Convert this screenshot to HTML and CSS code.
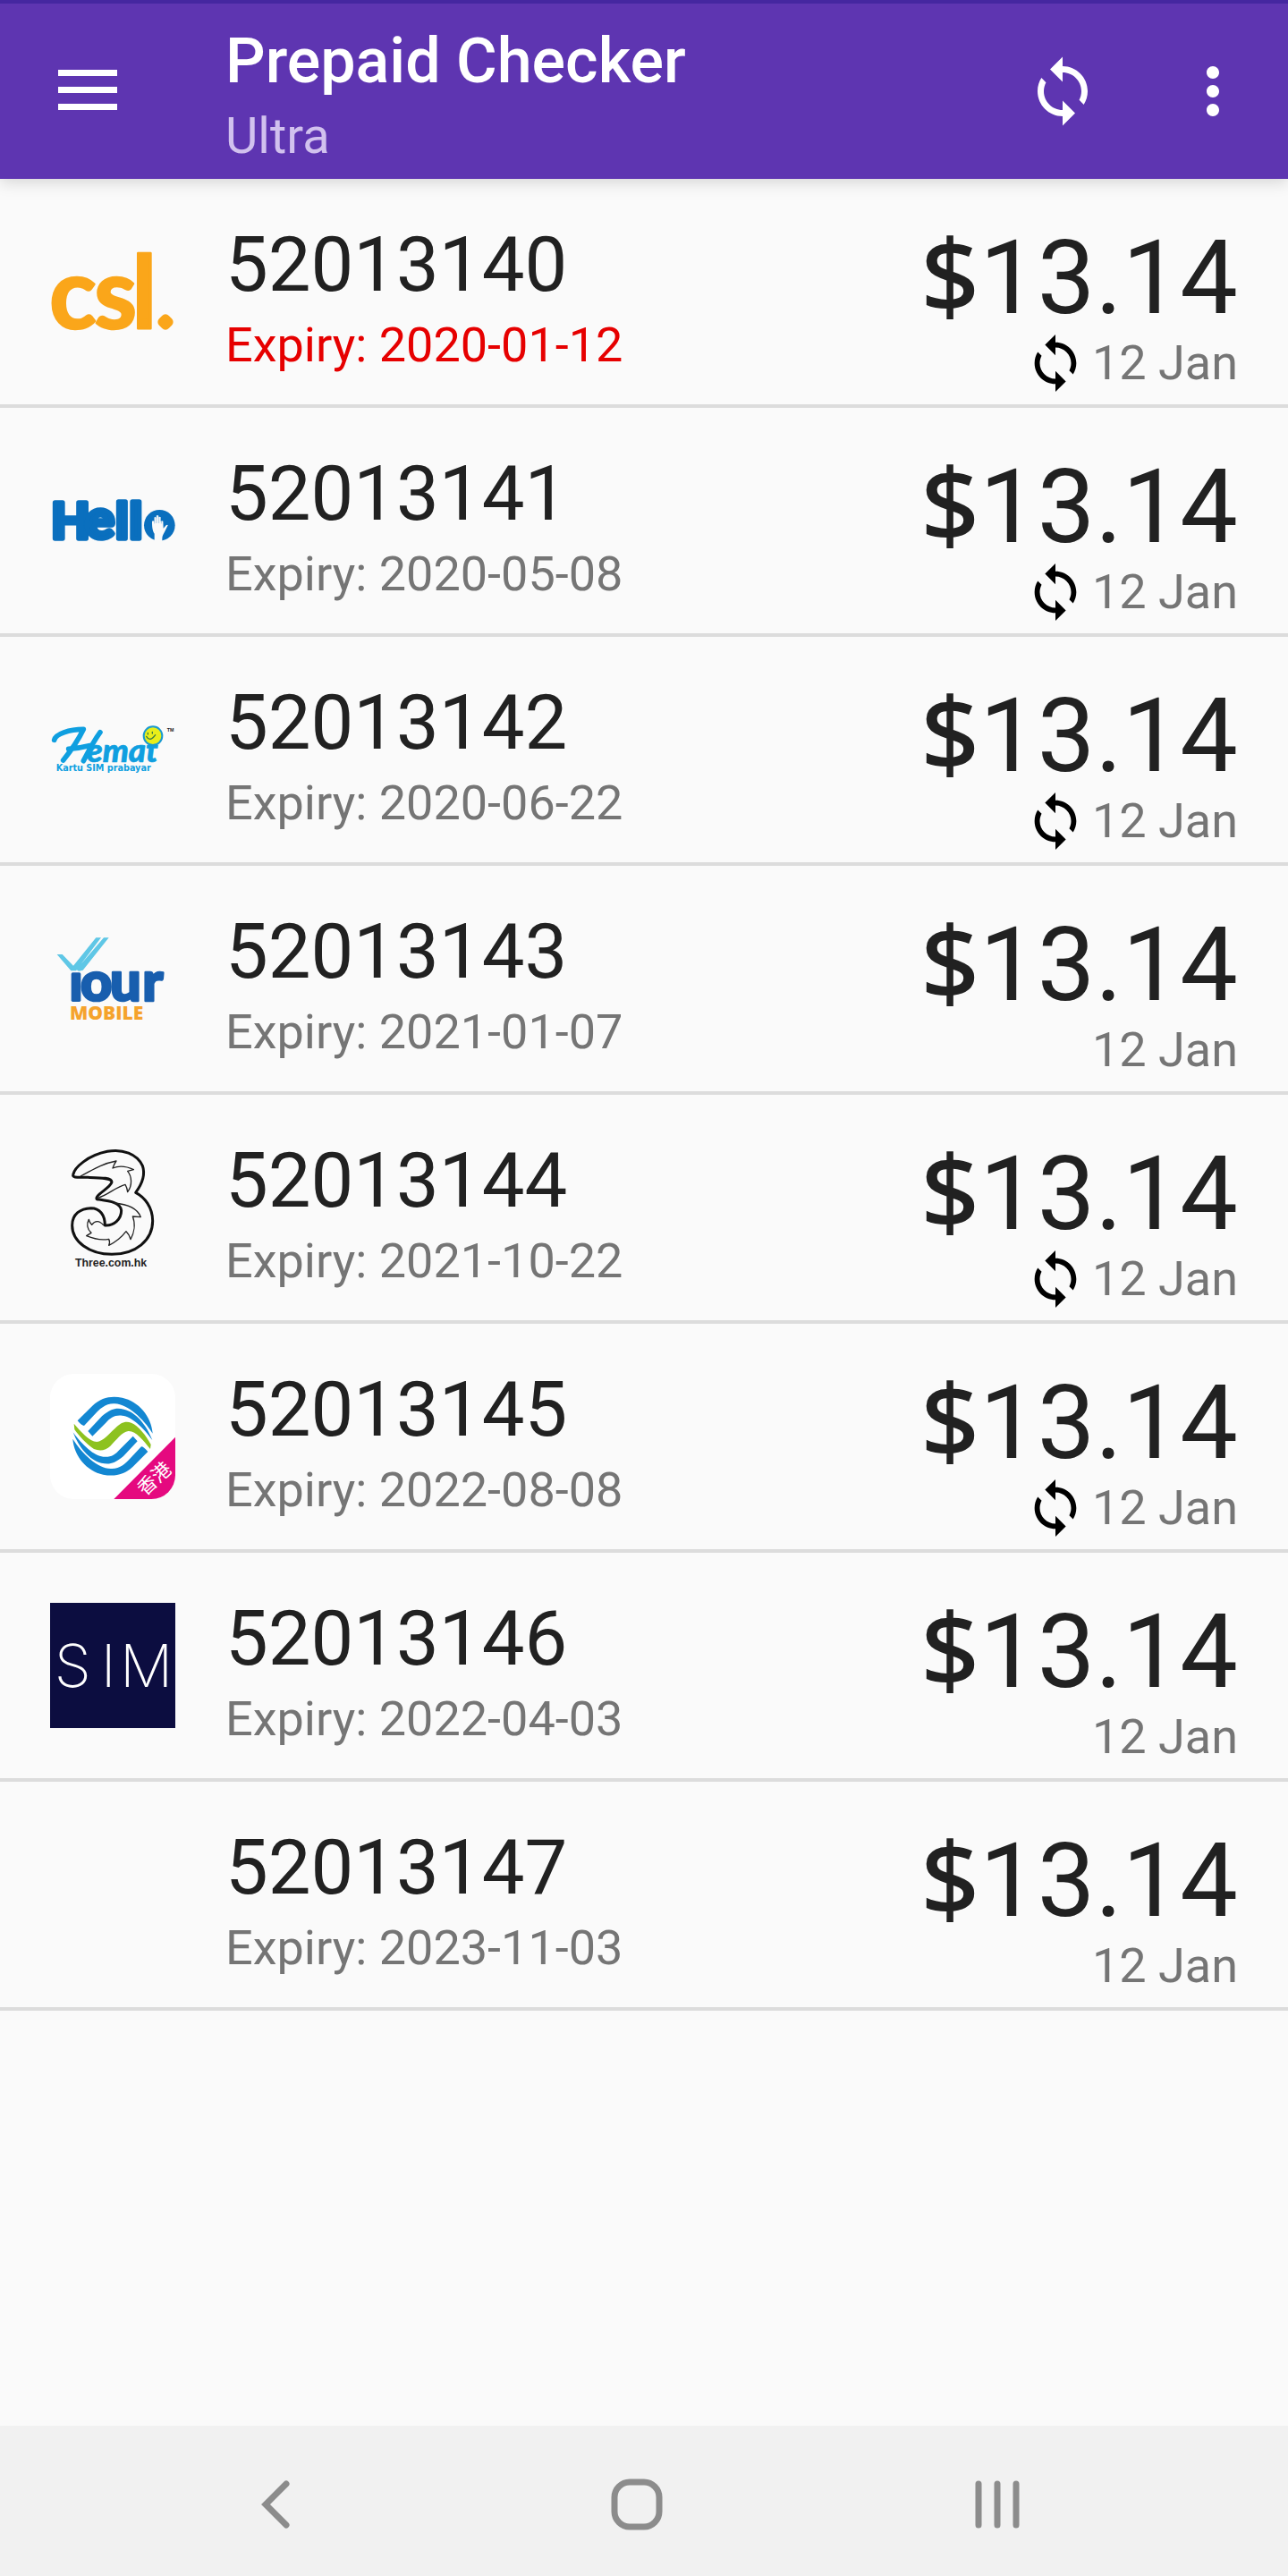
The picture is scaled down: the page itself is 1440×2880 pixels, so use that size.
FILE: index.html
```html
<!DOCTYPE html>
<html lang="en">
  <head>
    <meta charset="UTF-8" />
    <meta name="viewport" content="width=device-width, initial-scale=1.0" />
    <title>Prepaid Checker</title>
    <link rel="stylesheet" href="styles.css">
  </head>
  <body>
    <!-- Shared icons -->
    <svg class="sprite" aria-hidden="true">
      <symbol id="icon-sync" viewBox="0 0 24 24">
        <path d="M12 4V1L8 5l4 4V6c3.31 0 6 2.69 6 6 0 1.01-.25 1.97-.7 2.8l1.46 1.46C19.54 15.03 20 13.57 20 12c0-4.42-3.58-8-8-8zm0 14c-3.31 0-6-2.69-6-6 0-1.01.25-1.97.7-2.8L5.24 7.74C4.46 8.97 4 10.43 4 12c0 4.42 3.58 8 8 8v3l4-4-4-4v3z" />
      </symbol>
    </svg>

    <header class="app-bar">
      <button class="icon-button" type="button" aria-label="Menu">
        <svg class="icon" viewBox="0 0 84 84"><path d="M9 18h66v7H9zM9 37h66v7H9zM9 56h66v7H9z" /></svg>
      </button>
      <div class="app-title">
        <h1>Prepaid Checker</h1>
        <p>Ultra</p>
      </div>
      <div class="actions">
        <button class="icon-button" type="button" aria-label="Refresh">
          <svg class="icon"><use href="#icon-sync" /></svg>
        </button>
        <button class="icon-button" type="button" aria-label="More options">
          <svg class="icon" viewBox="0 0 24 24"><path d="M12 8c1.1 0 2-.9 2-2s-.9-2-2-2-2 .9-2 2 .9 2 2 2zm0 2c-1.1 0-2 .9-2 2s.9 2 2 2 2-.9 2-2-.9-2-2-2zm0 6c-1.1 0-2 .9-2 2s.9 2 2 2 2-.9 2-2-.9-2-2-2z" /></svg>
        </button>
      </div>
    </header>

    <main>
      <ul class="sim-list">
        <li class="sim">
          <svg class="logo" viewBox="48 -12 420 420" role="img" aria-label="csl">
            <g class="csl">
              <text y="322"><tspan x="46">c</tspan><tspan x="196">s</tspan><tspan class="csl-tall" x="322">l</tspan></text>
              <path class="csl-foot" d="M356 292q3 12 16 16" />
              <rect x="416" y="281" width="38" height="38" rx="12" transform="rotate(45 435 300)" />
            </g>
          </svg>
          <div class="sim-info">
            <h2>52013140</h2>
            <p class="expired">Expiry: 2020-01-12</p>
          </div>
          <div class="balance">
            <strong><span class="currency">$</span>13.14</strong>
            <p><svg class="sync"><use href="#icon-sync" /></svg><time>12 Jan</time></p>
          </div>
        </li>

        <li class="sim">
          <svg class="logo" viewBox="48 -84 420 420" role="img" aria-label="Hello">
            <text class="hello" y="185"><tspan x="52">H</tspan><tspan class="hello-round" x="166">e</tspan><tspan x="268 314">ll</tspan></text>
            <circle cx="415" cy="142" r="52" fill="#0a6fbe" />
            <path d="M398 198V170c-8-12-8-28-8-42q3-3 7 0v-12q3-4 7 0v-6q4-4 8 0v5q4-4 7 0v13q4-3 8 0l1 24 9-10q5-3 6 0l-11 22c-4 8-8 12-8 22v14z" fill="#fafafa" />
            <path d="M398 116v20M405 110v25M413 112v23M421 118v18" stroke="#0a6fbe" stroke-width="1" />
          </svg>
          <div class="sim-info">
            <h2>52013141</h2>
            <p>Expiry: 2020-05-08</p>
          </div>
          <div class="balance">
            <strong><span class="currency">$</span>13.14</strong>
            <p><svg class="sync"><use href="#icon-sync" /></svg><time>12 Jan</time></p>
          </div>
        </li>

        <li class="sim">
          <svg class="logo" viewBox="48 -66 420 420" role="img" aria-label="Hemat">
            <path d="M62 112c4-20 50-36 98-36q-24 50-68 104M216 86q-22 30-56 96M110 142q36-2 76-12" class="hemat-swash" />
            <text class="hemat" x="170" y="186">emat</text>
            <text class="hemat-sub" x="68" y="216">Kartu SIM prabayar</text>
            <path d="M378 124l-4 16 20-14z" fill="#0f9fe0" />
            <circle cx="393" cy="98" r="31" fill="#e8ee1a" stroke="#1b9ad0" stroke-width="6" />
            <path d="M371 100q12 20 30-5M376 88v5M391 85v5" class="smile" />
            <text class="hemat-tm" x="440" y="84">TM</text>
          </svg>
          <div class="sim-info">
            <h2>52013142</h2>
            <p>Expiry: 2020-06-22</p>
          </div>
          <div class="balance">
            <strong><span class="currency">$</span>13.14</strong>
            <p><svg class="sync"><use href="#icon-sync" /></svg><time>12 Jan</time></p>
          </div>
        </li>

        <li class="sim">
          <svg class="logo" viewBox="48 -18 420 420" role="img" aria-label="Your Mobile">
            <path d="M71 111h18l37 38 76-94h17l-84 111h-17zM228 55h17l-87 109-14 3-8-5z" fill="#5fc7e6" />
            <rect x="119" y="172" width="32" height="98" rx="5" fill="#185eae" />
            <text class="your" x="150 249 358" y="266">our</text>
            <text class="your-mobile" x="114" y="329">MOBILE</text>
          </svg>
          <div class="sim-info">
            <h2>52013143</h2>
            <p>Expiry: 2021-01-07</p>
          </div>
          <div class="balance">
            <strong><span class="currency">$</span>13.14</strong>
            <p><time>12 Jan</time></p>
          </div>
        </li>

        <li class="sim">
          <svg class="logo" viewBox="48 30 420 420" role="img" aria-label="Three">
            <path class="three-body" d="M125 130c5-25 50-65 115-78 50-10 100 8 118 48 12 35-8 70-23 90 30 15 57 50 57 95 0 65-57 112-137 112-75 0-133-42-133-97 0-38 28-57 63-58 30 0 47 23 47 58 30 2 55-20 55-50-2-28-42-32-82-38-10-12 45-37 50-57 0-15-35-15-80-16-30-1-53 3-50-9z" />
            <path class="three-flame" d="M150 135c40-20 65-40 120-51q-8 11-12 24 32-13 70 5l-20 5c14 17 17 47 0 70q-2-16-8-25c-30 7-60 37-92 45M262 225c38 3 78 15 90 47l-27-2c10 25 5 55-7 77q-4-17-15-27-23 30-58 47 5-12 0-21-35 6-75-11l16-10q-21-20-8-45 2 10 10 18 17-23 40 2" />
            <text class="three-text" x="132" y="438">Three.com.hk</text>
          </svg>
          <div class="sim-info">
            <h2>52013144</h2>
            <p>Expiry: 2021-10-22</p>
          </div>
          <div class="balance">
            <strong><span class="currency">$</span>13.14</strong>
            <p><svg class="sync"><use href="#icon-sync" /></svg><time>12 Jan</time></p>
          </div>
        </li>

        <li class="sim">
          <svg class="logo" viewBox="48 48 420 420" role="img" aria-label="China Mobile Hong Kong">
            <defs>
              <clipPath id="tile"><rect x="48" y="48" width="420" height="420" rx="80" /></clipPath>
              <g id="waves">
                <path d="M140 205l50-50c30-28 62-34 100-27 55 12 98 62 102 120-32-50-82-98-127-100-30-2-50 17-70 39l-33 35q-8 0-22-17z" />
                <path d="M175 240l47-50c33-28 50-28 74-23 40 9 76 53 95 103-31-43-71-80-101-82-25-3-40 7-55 24l-45 45z" />
              </g>
            </defs>
            <g clip-path="url(#tile)">
              <path d="M48 48h420v420H48z" fill="#fff" />
              <path d="M468 260v208H262z" fill="#e5097f" />
            </g>
            <use href="#waves" fill="#1387d2" />
            <use href="#waves" fill="#1387d2" transform="rotate(180 258 257)" />
            <path d="M128 215c22 25 52 60 77 61 20-1 40-26 60-44 20-22 37-27 55-20 25 10 50 43 66 73l-2 15c-24-30-49-62-74-60-20 2-40 30-60 50-15 15-35 18-55 10-25-15-50-45-65-65z" fill="#8dc21f" />
            <text class="hk" x="398" y="422" transform="rotate(-43 398 400)">香港</text>
          </svg>
          <div class="sim-info">
            <h2>52013145</h2>
            <p>Expiry: 2022-08-08</p>
          </div>
          <div class="balance">
            <strong><span class="currency">$</span>13.14</strong>
            <p><svg class="sync"><use href="#icon-sync" /></svg><time>12 Jan</time></p>
          </div>
        </li>

        <li class="sim">
          <svg class="logo" viewBox="48 36 420 420" role="img" aria-label="SIM">
            <path d="M48 36h420v420H48z" fill="#0c0d40" />
            <text class="sim-text" x="62 218 282" y="318">SIM</text>
          </svg>
          <div class="sim-info">
            <h2>52013146</h2>
            <p>Expiry: 2022-04-03</p>
          </div>
          <div class="balance">
            <strong><span class="currency">$</span>13.14</strong>
            <p><time>12 Jan</time></p>
          </div>
        </li>

        <li class="sim">
          <div class="logo"></div>
          <div class="sim-info">
            <h2>52013147</h2>
            <p>Expiry: 2023-11-03</p>
          </div>
          <div class="balance">
            <strong><span class="currency">$</span>13.14</strong>
            <p><time>12 Jan</time></p>
          </div>
        </li>
      </ul>
    </main>

    <nav class="nav-bar">
      <button type="button" aria-label="Back">
        <svg viewBox="0 0 64 64"><path d="M43 9L20 32l23 23" /></svg>
      </button>
      <button type="button" aria-label="Home">
        <svg viewBox="0 0 64 64"><rect x="7" y="7" width="50" height="50" rx="17" /></svg>
      </button>
      <button type="button" aria-label="Recent apps">
        <svg viewBox="0 0 64 64"><path d="M11 9v46M32 9v46M53 9v46" /></svg>
      </button>
    </nav>
  </body>
</html>
```
FILE: styles.css
```css
* {
  box-sizing: border-box;
}

body {
  font-family: Roboto, "Noto Sans", sans-serif;
  background-color: #fafafa;
  color: #212121;
  margin: 0;
  min-height: 100vh;
  display: flex;
  flex-direction: column;
}

h1,
h2,
p,
ul {
  margin: 0;
  padding: 0;
}

button {
  background: none;
  border: none;
  padding: 0;
  color: inherit;
  cursor: pointer;
}

svg {
  display: block;
}

.sprite {
  display: none;
}

/* App bar */
.app-bar {
  display: flex;
  align-items: center;
  height: 200px;
  padding: 0 42px 0 56px;
  border-top: 4px solid #4527a0;
  background-color: #5e35b1;
  color: #fff;
  box-shadow: 0 4px 16px rgba(0, 0, 0, 0.15);
}

.icon {
  width: 84px;
  height: 84px;
  fill: currentColor;
}

.app-title {
  flex: 1;
  margin-left: 112px;
  padding-top: 8px;
}

.app-title h1 {
  font-size: 70px;
  line-height: 82px;
  font-weight: 500;
}

.app-title p {
  font-size: 56px;
  line-height: 66px;
  margin-top: 10px;
  color: #d1c1ee;
}

.actions {
  display: flex;
  gap: 84px;
}

/* SIM list */
main {
  flex: 1;
}

.sim-list {
  list-style: none;
}

.sim {
  display: flex;
  padding: 0 56px;
  border-bottom: 4px solid #dcdcdc;
}

.logo {
  width: 140px;
  height: 140px;
  margin: 56px 56px 56px 0;
  overflow: visible;
}

.sim-info {
  flex: 1;
  padding-top: 48px;
}

.sim-info h2 {
  font-size: 85px;
  line-height: 96px;
  font-weight: 400;
}

.sim-info p {
  font-size: 54px;
  line-height: 64px;
  margin-top: 10px;
  color: #757575;
}

.sim-info .expired {
  color: #e60000;
}

.balance {
  padding-top: 48px;
}

.balance strong {
  display: block;
  font-size: 115px;
  line-height: 126px;
  font-weight: 400;
}

.currency {
  font-family: "Noto Sans", sans-serif;
  font-weight: 500;
  line-height: 1;
}

.balance p {
  display: flex;
  justify-content: flex-end;
  align-items: center;
  gap: 6px;
  height: 64px;
  font-size: 54px;
  line-height: 64px;
  color: #757575;
}

.sync {
  width: 70px;
  height: 70px;
  fill: #000;
}

/* Carrier logos */
.csl {
  fill: #faa61a;
  stroke: #faa61a;
  stroke-width: 8px;
  stroke-linejoin: round;
  font: 700 326px Lato, sans-serif;
}

.csl-tall {
  font-size: 340px;
}

.csl-foot {
  fill: none;
  stroke-width: 30px;
}

.hello {
  fill: #0a6fbe;
  stroke: #0a6fbe;
  stroke-width: 16px;
  stroke-linejoin: round;
  font: 900 168px Lato, sans-serif;
}

.hello-round {
  font-size: 184px;
}

.hemat {
  fill: #0f9fe0;
  stroke: #0f9fe0;
  stroke-width: 2px;
  font: italic 900 110px Lato, sans-serif;
}

.hemat-swash {
  fill: none;
  stroke: #0f9fe0;
  stroke-width: 17px;
  stroke-linecap: round;
  stroke-linejoin: round;
}

.hemat-sub {
  fill: #0f9fe0;
  font: 700 29px "DejaVu Sans", sans-serif;
}

.hemat-tm {
  fill: #222;
  font: 700 16px "Liberation Sans", sans-serif;
}

.smile {
  fill: none;
  stroke: #3a7d44;
  stroke-width: 4px;
  stroke-linecap: round;
}

.your {
  fill: #185eae;
  stroke: #185eae;
  stroke-width: 8px;
  stroke-linejoin: round;
  font: 900 184px Lato, sans-serif;
}

.your-mobile {
  fill: #f5a32c;
  font: 800 63px "Open Sans", sans-serif;
}

.three-body {
  fill: none;
  stroke: #111;
  stroke-width: 9px;
  stroke-linejoin: round;
}

.three-flame {
  fill: none;
  stroke: #222;
  stroke-width: 4px;
  stroke-linejoin: round;
}

.three-text {
  fill: #222;
  font: 700 37px "Liberation Sans", sans-serif;
}

.hk {
  fill: #fff;
  font: 400 64px "Noto Sans CJK TC", sans-serif;
  text-anchor: middle;
}

.sim-text {
  fill: #fff;
  font: 200 198px Inter, sans-serif;
}

/* System navigation */
.nav-bar {
  display: grid;
  grid-template-columns: repeat(3, 1fr);
  height: 168px;
  padding: 8px 124px 0 108px;
  background-color: #f1f1f1;
}

.nav-bar button {
  display: flex;
  align-items: center;
  justify-content: center;
}

.nav-bar svg {
  width: 64px;
  height: 64px;
  fill: none;
  stroke: #8c8c8c;
  stroke-width: 7px;
  stroke-linecap: round;
}
```
